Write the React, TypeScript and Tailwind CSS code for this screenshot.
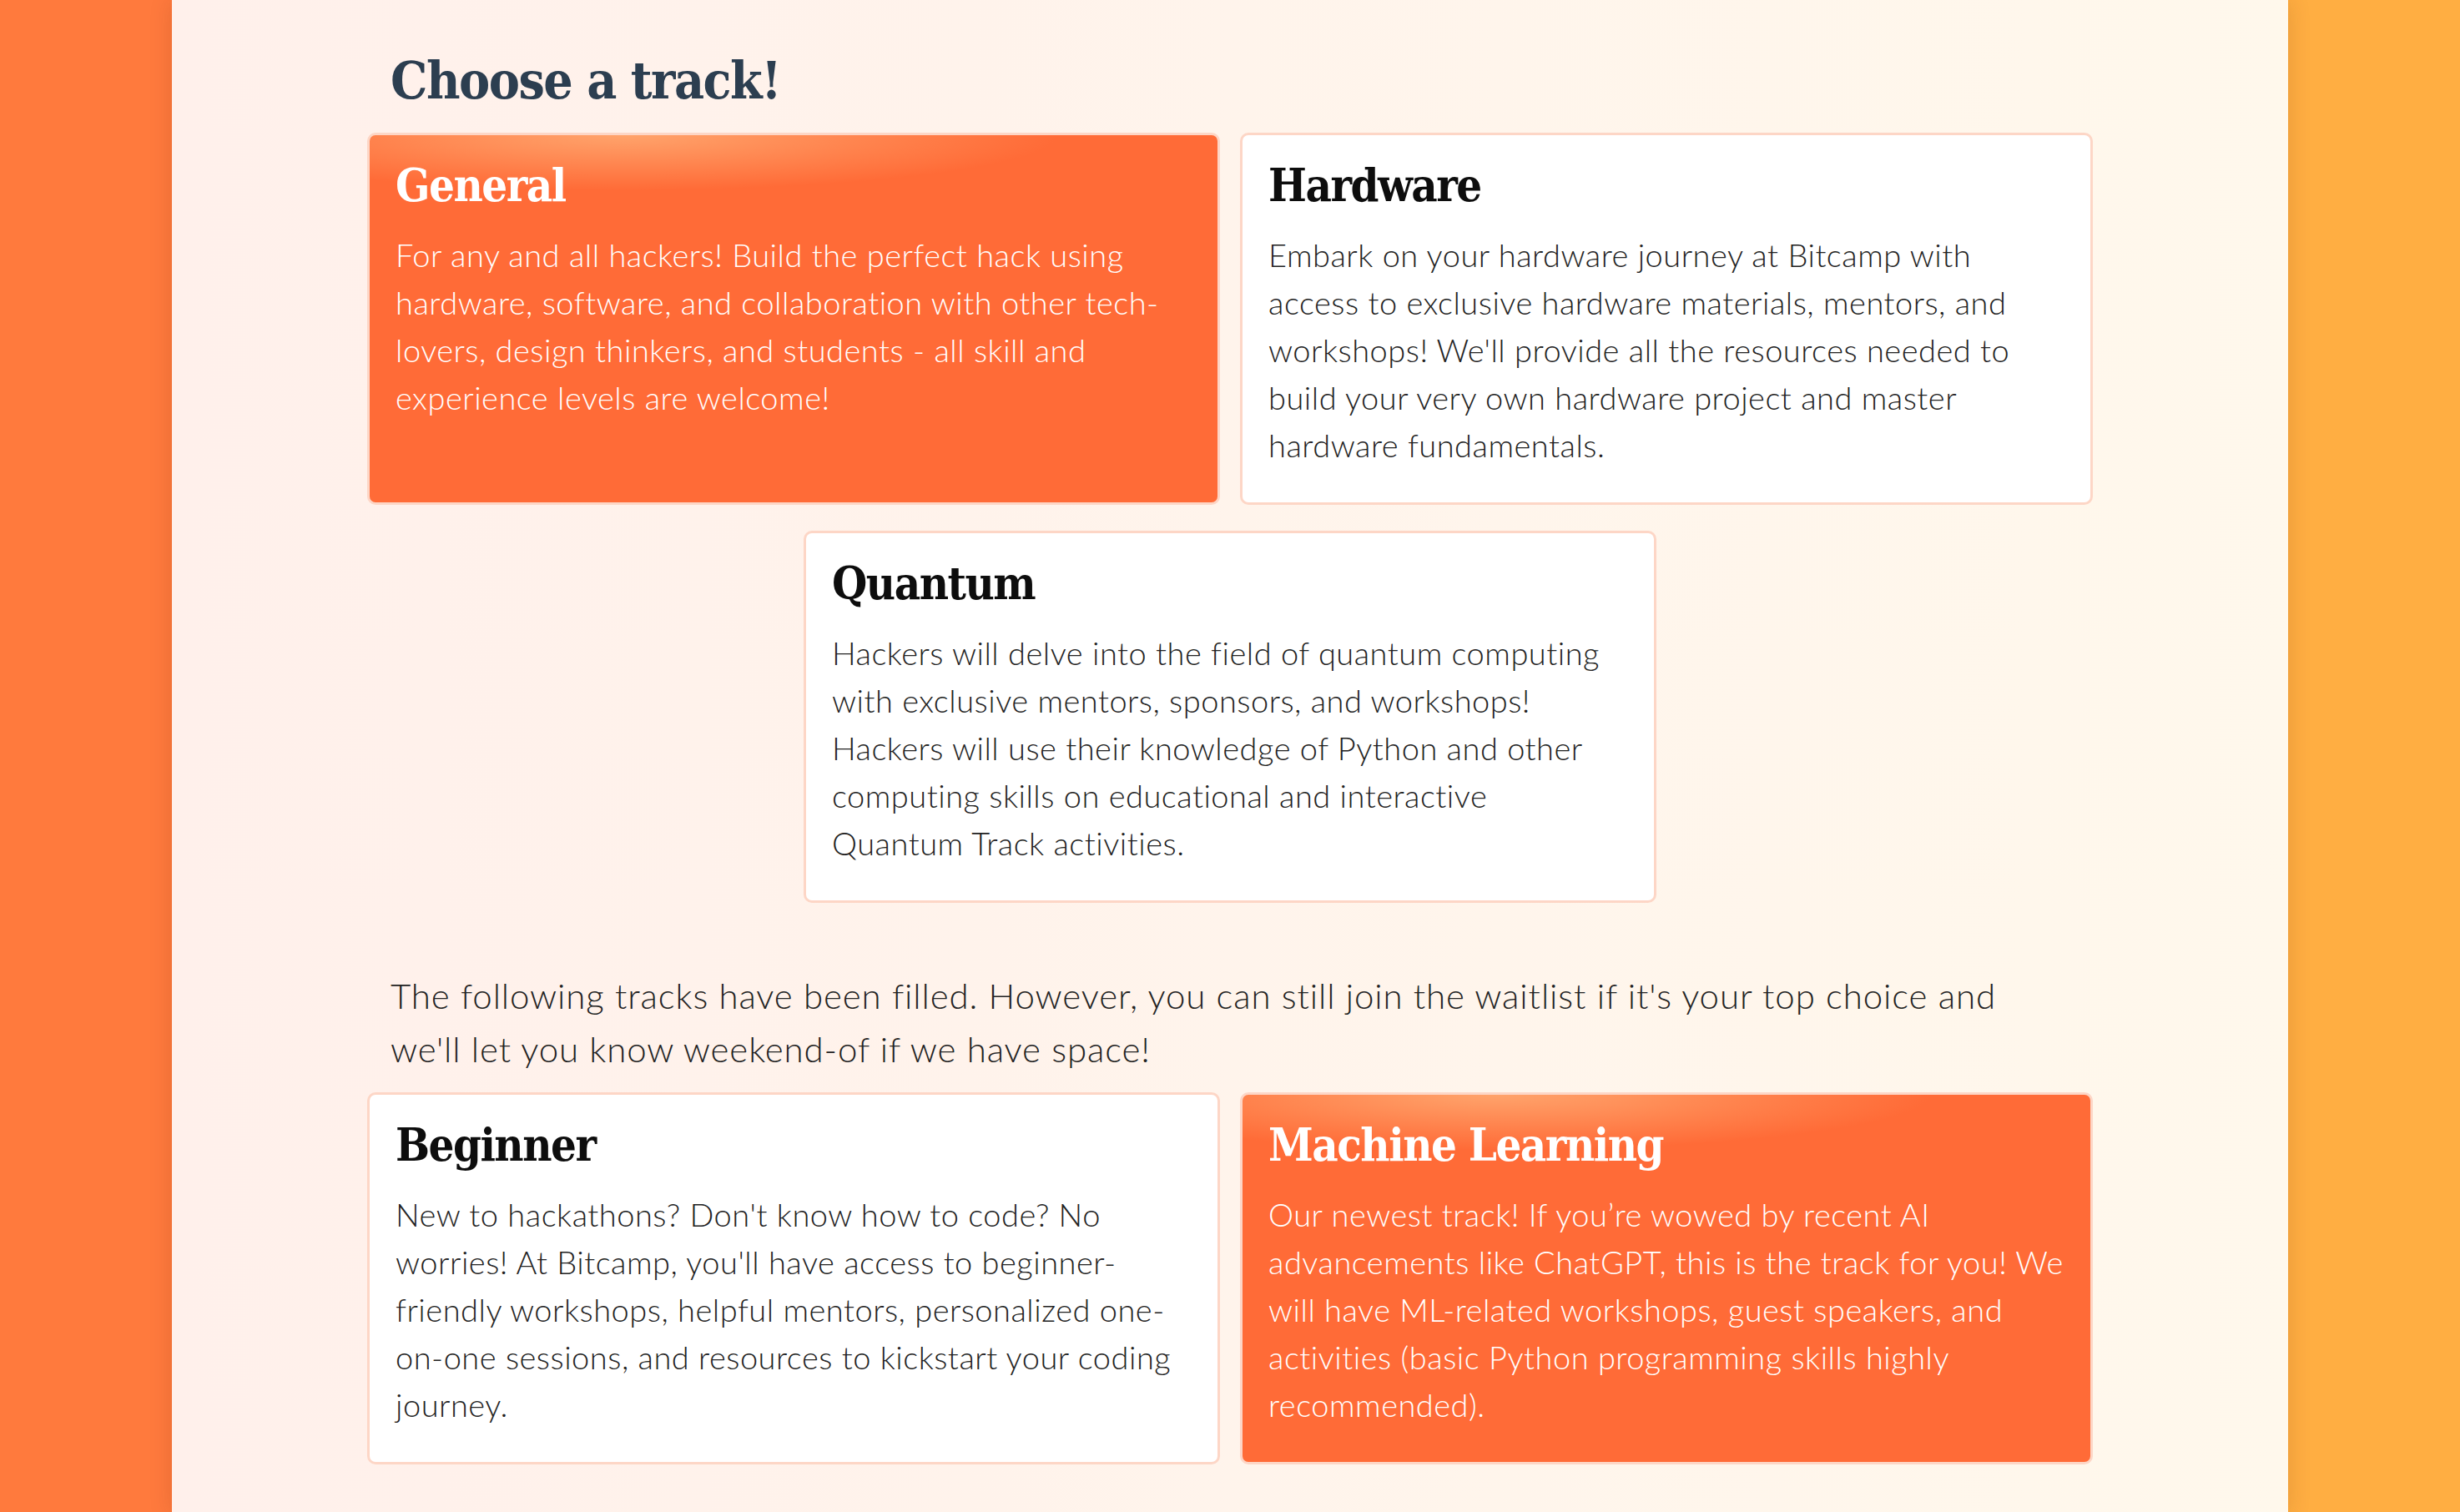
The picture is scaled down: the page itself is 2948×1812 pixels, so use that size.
const tracks = {
  general: {
    title: 'General',
    lines: [
      'For any and all hackers! Build the perfect hack using',
      'hardware, software, and collaboration with other tech-',
      'lovers, design thinkers, and students - all skill and',
      'experience levels are welcome!',
    ],
  },
  hardware: {
    title: 'Hardware',
    lines: [
      'Embark on your hardware journey at Bitcamp with',
      'access to exclusive hardware materials, mentors, and',
      "workshops! We'll provide all the resources needed to",
      'build your very own hardware project and master',
      'hardware fundamentals.',
    ],
  },
  quantum: {
    title: 'Quantum',
    lines: [
      'Hackers will delve into the field of quantum computing',
      'with exclusive mentors, sponsors, and workshops!',
      'Hackers will use their knowledge of Python and other',
      'computing skills on educational and interactive',
      'Quantum Track activities.',
    ],
  },
  beginner: {
    title: 'Beginner',
    lines: [
      "New to hackathons? Don't know how to code? No",
      "worries! At Bitcamp, you'll have access to beginner-",
      'friendly workshops, helpful mentors, personalized one-',
      'on-one sessions, and resources to kickstart your coding',
      'journey.',
    ],
  },
  ml: {
    title: 'Machine Learning',
    lines: [
      'Our newest track! If you’re wowed by recent AI',
      'advancements like ChatGPT, this is the track for you! We',
      'will have ML-related workshops, guest speakers, and',
      'activities (basic Python programming skills highly',
      'recommended).',
    ],
  },
}

type Track = { title: string; lines: string[] }

const slab = { fontFamily: '"DejaVu Serif Condensed", "DejaVu Serif", serif' }

function TrackCard({ track, selected = false }: { track: Track; selected?: boolean }) {
  return (
    <div
      className={`h-[446px] w-[1022px] rounded-[10px] border-[3px] border-[#fdd6c6] px-[31px] pt-[28px] ${
        selected
          ? 'bg-[#ff6b37] bg-[radial-gradient(ellipse_520px_66px_at_30%_0%,rgba(255,166,110,0.95),rgba(255,150,90,0))] text-white'
          : 'bg-white text-[#222]'
      }`}
    >
      <h2
        className={`text-[54px] leading-[1.2] font-bold tracking-[-1.5px] ${selected ? 'text-white' : 'text-[#0d0d0d]'}`}
        style={slab}
      >
        {track.title}
      </h2>
      <p className="mt-[22px] font-['Lato',sans-serif] text-[38px] leading-[57px] font-light tracking-[0.5px]">
        {track.lines.map((line, i) => (
          <span key={i} className="block whitespace-nowrap">
            {line}
          </span>
        ))}
      </p>
    </div>
  )
}

export default function App() {
  return (
    <div className="flex min-h-screen w-full">
      <div className="w-[206px] shrink-0 bg-[#ff7a3d]" />

      <main className="relative z-10 flex-1 bg-linear-to-r from-[#fff0eb] to-[#fff8ec] pb-[60px] shadow-[0_0_26px_rgba(90,30,0,0.16)]">
        <div className="mx-auto w-[2068px] pt-[60px]">
          <h1 className="pl-[28px] text-[62px] leading-[1.2] font-bold tracking-[-1.5px] text-[#2c3e50]" style={slab}>
            Choose a track!
          </h1>

          {/* open tracks */}
          <div className="mt-[25px] flex justify-center gap-[24px]">
            <TrackCard track={tracks.general} selected />
            <TrackCard track={tracks.hardware} />
          </div>
          <div className="mt-[31px] flex justify-center">
            <TrackCard track={tracks.quantum} />
          </div>

          <p className="mt-[79px] pl-[28px] font-['Lato',sans-serif] text-[42px] leading-[64px] font-light tracking-[0.9px] text-[#222]">
            The following tracks have been filled. However, you can still join the waitlist if it's your top choice and
            <br />
            we'll let you know weekend-of if we have space!
          </p>

          {/* waitlisted tracks */}
          <div className="mt-[20px] flex justify-center gap-[24px]">
            <TrackCard track={tracks.beginner} />
            <TrackCard track={tracks.ml} selected />
          </div>
        </div>
      </main>

      <div className="w-[206px] shrink-0 bg-[#ffae42]" />
    </div>
  )
}
